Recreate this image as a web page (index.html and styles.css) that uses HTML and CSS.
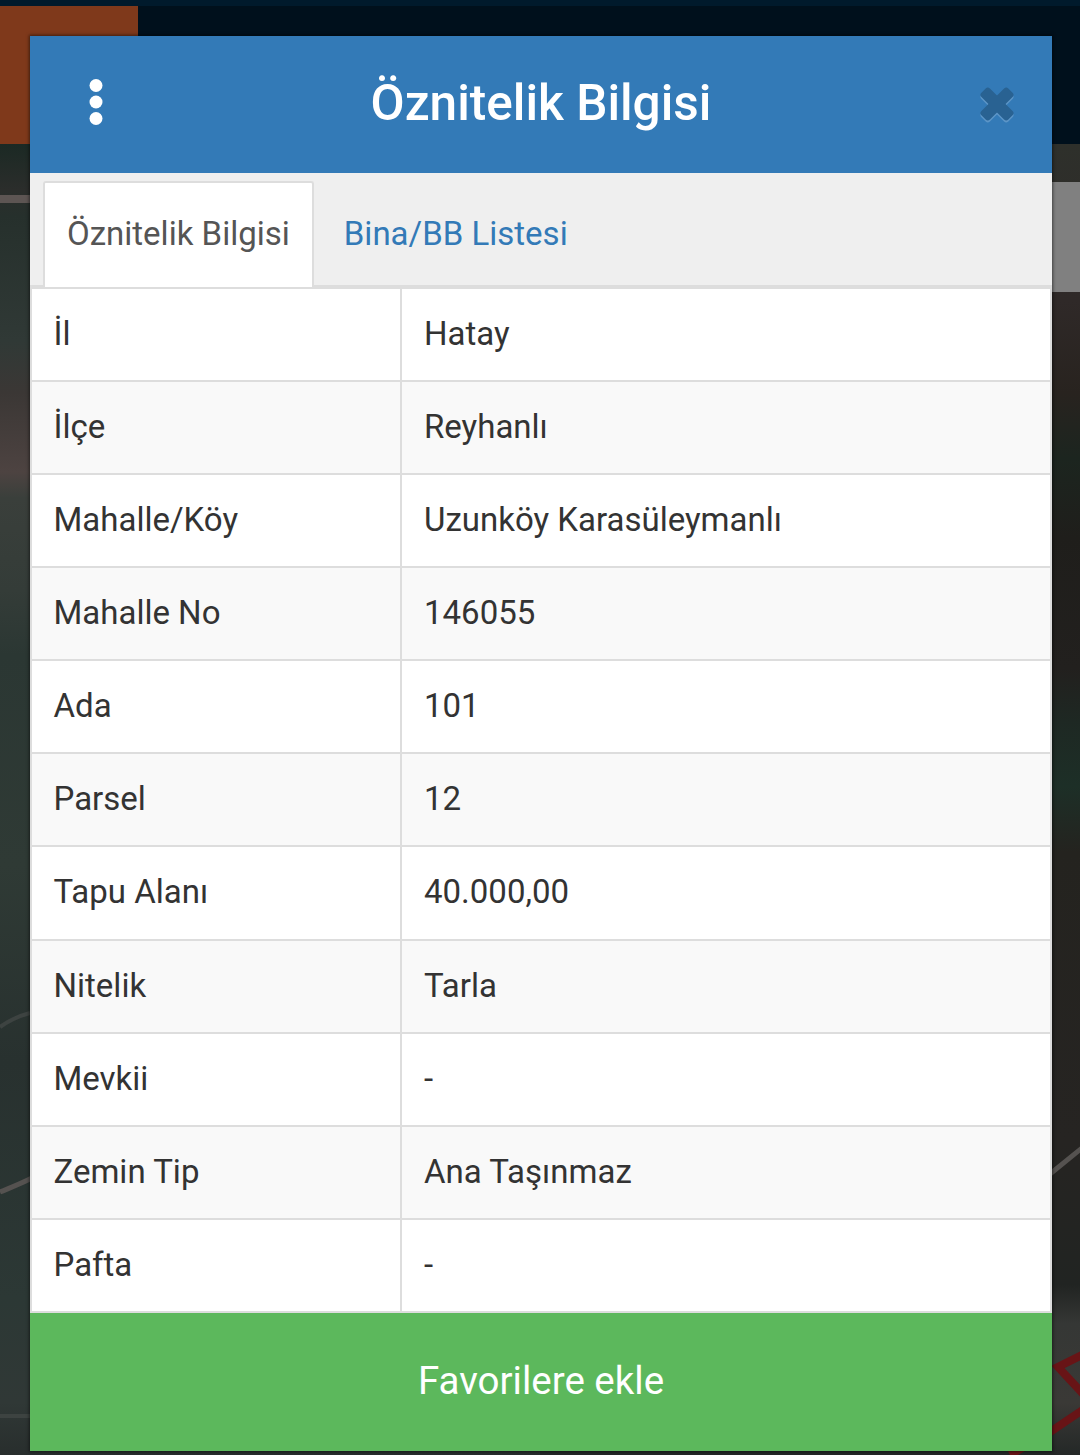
FILE: index.html
```html
<!DOCTYPE html>
<html lang="tr">
<head>
    <meta charset="UTF-8">
    <meta name="viewport" content="width=device-width, initial-scale=1.0">
    <title>Öznitelik Bilgisi</title>
    <link rel="stylesheet" href="styles.css">
</head>
<body>
    <!-- Karartılmış harita -->
    <svg class="map" viewBox="0 0 1080 1455" aria-hidden="true">
        <defs>
            <linearGradient id="mapLeft" x1="0" y1="144" x2="0" y2="1455" gradientUnits="userSpaceOnUse">
                <stop offset="0" stop-color="#1b2924"/>
                <stop offset=".035" stop-color="#2b2d2b"/>
                <stop offset=".055" stop-color="#26302c"/>
                <stop offset=".15" stop-color="#303936"/>
                <stop offset=".19" stop-color="#3b3735"/>
                <stop offset=".25" stop-color="#4d4341"/>
                <stop offset=".27" stop-color="#3a3f3b"/>
                <stop offset=".34" stop-color="#343c38"/>
                <stop offset=".39" stop-color="#2b3733"/>
                <stop offset=".55" stop-color="#2f3a35"/>
                <stop offset=".7" stop-color="#28312f"/>
                <stop offset=".88" stop-color="#2c3835"/>
                <stop offset=".96" stop-color="#303836"/>
                <stop offset="1" stop-color="#282e2d"/>
            </linearGradient>
            <linearGradient id="mapRight" x1="0" y1="144" x2="0" y2="1455" gradientUnits="userSpaceOnUse">
                <stop offset="0" stop-color="#2e302b"/>
                <stop offset=".12" stop-color="#2f2928"/>
                <stop offset=".19" stop-color="#28231f"/>
                <stop offset=".24" stop-color="#1c251f"/>
                <stop offset=".3" stop-color="#1f1e1b"/>
                <stop offset=".4" stop-color="#22201e"/>
                <stop offset=".44" stop-color="#1e2823"/>
                <stop offset=".49" stop-color="#1d2f27"/>
                <stop offset=".54" stop-color="#24231f"/>
                <stop offset=".76" stop-color="#262422"/>
                <stop offset=".87" stop-color="#212422"/>
                <stop offset=".9" stop-color="#353735"/>
                <stop offset=".96" stop-color="#3a3936"/>
                <stop offset="1" stop-color="#242827"/>
            </linearGradient>
        </defs>
        <rect x="0" y="144" width="540" height="1311" fill="url(#mapLeft)"/>
        <rect x="540" y="144" width="540" height="1311" fill="url(#mapRight)"/>
        <path class="road wide" d="M0 199H30"/>
        <path class="road" d="M0 1192C12 1187 20 1184 32 1178M1050 1174L1082 1148"/>
        <path class="road thin" d="M0 1027Q14 1017 30 1013M0 1416H30"/>
        <path class="parcel-line" d="M1084 1354L1058 1367L1084 1395M1084 1409L1050 1432L1010 1455"/>
    </svg>
    <div class="topbar">
        <div class="topbar-brand"></div>
    </div>
    <div class="map-control"></div>

    <div class="panel">
        <div class="panel-header">
            <button class="icon-button" aria-label="Menü">
                <svg class="menu-icon" viewBox="0 0 14 46">
                    <circle cx="7" cy="6.5" r="6.5"/>
                    <circle cx="7" cy="23" r="6.5"/>
                    <circle cx="7" cy="39.5" r="6.5"/>
                </svg>
            </button>
            <h1 class="panel-title">Öznitelik Bilgisi</h1>
            <button class="icon-button" aria-label="Kapat">
                <svg class="close-icon" viewBox="0 0 36 38">
                    <g class="close-shadow">
                        <rect x="-1" y="14" width="38" height="12" rx="3" transform="rotate(45 18 20)"/>
                        <rect x="-1" y="14" width="38" height="12" rx="3" transform="rotate(-45 18 20)"/>
                    </g>
                    <g class="close-mark">
                        <rect x="-1" y="12" width="38" height="12" rx="3" transform="rotate(45 18 18)"/>
                        <rect x="-1" y="12" width="38" height="12" rx="3" transform="rotate(-45 18 18)"/>
                    </g>
                </svg>
            </button>
        </div>

        <div class="tabs">
            <a class="tab active">Öznitelik Bilgisi</a>
            <a class="tab">Bina/BB Listesi</a>
        </div>

        <div class="attributes">
            <div class="row"><div class="name">İl</div><div class="value">Hatay</div></div>
            <div class="row"><div class="name">İlçe</div><div class="value">Reyhanlı</div></div>
            <div class="row"><div class="name">Mahalle/Köy</div><div class="value">Uzunköy Karasüleymanlı</div></div>
            <div class="row"><div class="name">Mahalle No</div><div class="value">146055</div></div>
            <div class="row"><div class="name">Ada</div><div class="value">101</div></div>
            <div class="row"><div class="name">Parsel</div><div class="value">12</div></div>
            <div class="row"><div class="name">Tapu Alanı</div><div class="value">40.000,00</div></div>
            <div class="row"><div class="name">Nitelik</div><div class="value">Tarla</div></div>
            <div class="row"><div class="name">Mevkii</div><div class="value">-</div></div>
            <div class="row"><div class="name">Zemin Tip</div><div class="value">Ana Taşınmaz</div></div>
            <div class="row"><div class="name">Pafta</div><div class="value">-</div></div>
        </div>

        <button class="favorite-button">Favorilere ekle</button>
    </div>
</body>
</html>
```
FILE: styles.css
```css
* {
    margin: 0;
    padding: 0;
    box-sizing: border-box;
}

body {
    position: relative;
    width: 1080px;
    height: 1455px;
    padding: 36px 28px 4px 30px;
    background: #282e2d;
    font-family: Roboto, 'Liberation Sans', sans-serif;
    font-size: 33px;
    color: #333;
    overflow: hidden;
}

/* panelin arkasındaki harita */
.map {
    position: absolute;
    top: 0;
    left: 0;
    width: 1080px;
    height: 1455px;
}

.road {
    fill: none;
    stroke: #555250;
    stroke-width: 5;
}

.road.wide {
    stroke: #5d5553;
    stroke-width: 8;
}

.road.thin {
    stroke: #3d4341;
    stroke-width: 4;
}

.parcel-line {
    fill: none;
    stroke: #681416;
    stroke-width: 8;
}

.topbar {
    position: absolute;
    top: 0;
    left: 0;
    width: 100%;
    height: 144px;
    background: #00101c;
    border-top: 6px solid #001a2c;
}

.topbar-brand {
    width: 138px;
    height: 100%;
    background: #7f391b;
}

.map-control {
    position: absolute;
    top: 182px;
    right: 0;
    width: 60px;
    height: 110px;
    background: #808080;
}

.panel {
    position: relative;
    height: 1415px;
    display: flex;
    flex-direction: column;
    background: #fff;
    box-shadow: 0 0 3px 1px rgba(0, 0, 0, 0.5);
}

.panel-header {
    height: 137px;
    display: flex;
    justify-content: space-between;
    align-items: center;
    padding: 0 20px 4px;
    background: #337ab7;
    color: #fff;
}

.panel-title {
    font-size: 49.5px;
    font-weight: 500;
    line-height: 50px;
}

.icon-button {
    width: 92px;
    height: 92px;
    display: flex;
    justify-content: center;
    align-items: center;
    background: none;
    border: none;
}

.menu-icon {
    width: 14px;
    height: 46px;
    margin-bottom: 1px;
    fill: #fff;
}

.close-icon {
    width: 36px;
    height: 38px;
    margin-top: 4px;
    margin-left: 21px;
}

.close-mark {
    fill: #296292;
}

.close-shadow {
    fill: #5c95c7;
}

.tabs {
    height: 114px;
    display: flex;
    padding: 8px 13px 0;
    background: #efefef;
    border-bottom: 2px solid #ddd;
}

.tab {
    height: 104px;
    padding: 0 22px;
    border: 2px solid transparent;
    border-bottom: none;
    line-height: 101px;
    color: #337ab7;
    margin-right: 6px;
}

.tab.active {
    height: 106px;
    background: #fff;
    border-color: #ddd;
    border-radius: 3px 3px 0 0;
    color: #555;
}

.attributes {
    height: 1025.8px;
    display: flex;
    flex-direction: column;
    border: 2px solid #ddd;
    border-top: none;
}

.row {
    flex: 1;
    display: flex;
    align-items: center;
    border-top: 2px solid #ddd;
}

.row:nth-child(even) {
    background: #f9f9f9;
}

.name,
.value {
    height: 100%;
    padding: 0 22px;
    line-height: 89px;
}

.name {
    width: 368px;
    padding-left: 21.5px;
}

.value {
    flex: 1;
    border-left: 2px solid #ddd;
}

.favorite-button {
    flex: 1;
    padding-bottom: 2px;
    background: #5cb85c;
    border: none;
    color: #fff;
    font-family: inherit;
    font-size: 38.5px;
}
```
